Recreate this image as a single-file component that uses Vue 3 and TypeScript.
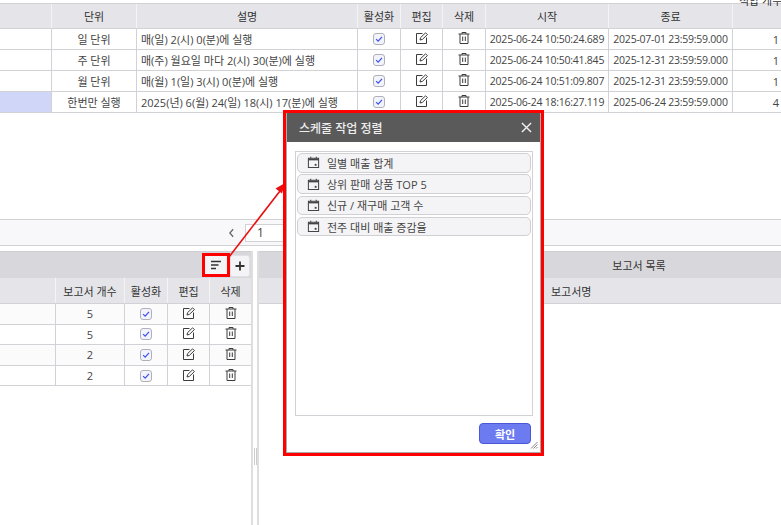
<script setup lang="ts">
interface TopRow { unit: string; desc: string; start: string; end: string; n: string; sel?: boolean }
const topRows: TopRow[] = [
  { unit: '일 단위', desc: '매(일) 2(시) 0(분)에 실행', start: '2025-06-24 10:50:24.689', end: '2025-07-01 23:59:59.000', n: '1' },
  { unit: '주 단위', desc: '매(주) 월요일 마다 2(시) 30(분)에 실행', start: '2025-06-24 10:50:41.845', end: '2025-12-31 23:59:59.000', n: '1' },
  { unit: '월 단위', desc: '매(월) 1(일) 3(시) 0(분)에 실행', start: '2025-06-24 10:51:09.807', end: '2025-12-31 23:59:59.000', n: '1' },
  { unit: '한번만 실행', desc: '2025(년) 6(월) 24(일) 18(시) 17(분)에 실행', start: '2025-06-24 18:16:27.119', end: '2025-06-24 23:59:59.000', n: '4', sel: true },
]
const reportCounts = ['5', '5', '2', '2']
const jobs = ['일별 매출 합계', '상위 판매 상품 TOP 5', '신규 / 재구매 고객 수', '전주 대비 매출 증감율']
</script>

<template>
  <div class="page">
    <section class="top-grid">
      <div class="row head">
        <div class="c c0"></div>
        <div class="c c1">단위</div>
        <div class="c c2">설명</div>
        <div class="c c3">활성화</div>
        <div class="c c4">편집</div>
        <div class="c c5">삭제</div>
        <div class="c c6">시작</div>
        <div class="c c7">종료</div>
        <div class="c c8 clipped"><span>적합 개수</span></div>
      </div>
      <div v-for="r in topRows" :key="r.start" class="row body">
        <div class="c c0" :class="{ sel: r.sel }"></div>
        <div class="c c1">{{ r.unit }}</div>
        <div class="c c2 left">{{ r.desc }}</div>
        <div class="c c3"><span class="chk"><svg viewBox="0 0 12 12" width="10" height="10"><path d="M2.500 6.200 5 8.600 9.600 3.400" fill="none" stroke="#3f52f0" stroke-width="1.500"/></svg></span></div>
        <div class="c c4"><svg class="ic" viewBox="0 0 14 14" width="14" height="14"><path d="M7.500 2.500H1.500v10h10V6.500" fill="none" stroke="#3c3c3c" stroke-width="1"/><path d="M5 9l.6-2.400 5-4.800 1.800 1.800-5 4.800z" fill="none" stroke="#3c3c3c" stroke-width="1"/></svg></div>
        <div class="c c5"><svg class="ic" viewBox="0 0 14 14" width="14" height="14"><path d="M1.500 3h11M5 3V1.500h4V3M3 3v9.500h8V3M5.700 5.500v4.500M8.300 5.500v4.500" fill="none" stroke="#3c3c3c" stroke-width="1"/></svg></div>
        <div class="c c6 date">{{ r.start }}</div>
        <div class="c c7 date">{{ r.end }}</div>
        <div class="c c8 right">{{ r.n }}</div>
      </div>
    </section>

    <div class="pager">
      <span class="prev"><svg viewBox="0 0 8 12" width="7" height="10"><path d="M6 1.500 2 6l4 4.500" fill="none" stroke="#666" stroke-width="1.500"/></svg></span>
      <span class="page-input">1</span>
    </div>

    <section class="lower">
      <div class="panel left-panel">
        <div class="bar">
          <span class="mark"><button class="tool sort"><svg viewBox="0 0 12 10" width="12" height="10"><path d="M1 1.500h10M1 5h7.500M1 8.500h5" stroke="#333" stroke-width="1.400" fill="none"/></svg></button></span>
          <button class="tool plus"><svg viewBox="0 0 10 10" width="10" height="10"><path d="M5 .5v9M.5 5h9" stroke="#333" stroke-width="1.800" fill="none"/></svg></button>
        </div>
        <div class="lrow lhead">
          <div class="l l0"></div>
          <div class="l l1">보고서 개수</div>
          <div class="l l2">활성화</div>
          <div class="l l3">편집</div>
          <div class="l l4">삭제</div>
        </div>
        <div v-for="(n, i) in reportCounts" :key="i" class="lrow lbody">
          <div class="l l0"></div>
          <div class="l l1">{{ n }}</div>
          <div class="l l2"><span class="chk"><svg viewBox="0 0 12 12" width="10" height="10"><path d="M2.500 6.200 5 8.600 9.600 3.400" fill="none" stroke="#3f52f0" stroke-width="1.500"/></svg></span></div>
          <div class="l l3"><svg class="ic" viewBox="0 0 14 14" width="14" height="14"><path d="M7.500 2.500H1.500v10h10V6.500" fill="none" stroke="#3c3c3c" stroke-width="1"/><path d="M5 9l.6-2.400 5-4.800 1.800 1.800-5 4.800z" fill="none" stroke="#3c3c3c" stroke-width="1"/></svg></div>
          <div class="l l4"><svg class="ic" viewBox="0 0 14 14" width="14" height="14"><path d="M1.500 3h11M5 3V1.500h4V3M3 3v9.500h8V3M5.700 5.500v4.500M8.300 5.500v4.500" fill="none" stroke="#3c3c3c" stroke-width="1"/></svg></div>
        </div>
      </div>
      <div class="splitter"><span class="grip"></span></div>
      <div class="panel right-panel">
        <div class="bar title">보고서 목록</div>
        <div class="rhead">보고서명</div>
      </div>
    </section>

    <svg class="arrow" viewBox="0 0 781 525" width="781" height="525">
      <path d="M229 257 280 191" stroke="#e81010" stroke-width="1.600" fill="none"/>
      <path d="M285 183 275.500 188.500 282 193.500z" fill="#e81010"/>
    </svg>

    <div class="modal">
      <div class="m-title">
        <span>스케줄 작업 정렬</span>
        <svg viewBox="0 0 12 12" width="11" height="11"><path d="M1 1l10 10M11 1 1 11" stroke="#f2f2f2" stroke-width="1.500" fill="none"/></svg>
      </div>
      <div class="m-body">
        <div class="m-list">
          <div v-for="j in jobs" :key="j" class="job">
            <svg viewBox="0 0 14 14" width="13" height="13"><path d="M1.500 2.500h11v10h-11z" fill="none" stroke="#444" stroke-width="1.100"/><path d="M1.500 3.800h11" fill="none" stroke="#444" stroke-width="1.800"/><path d="M4 .8v2M10 .8v2" fill="none" stroke="#444" stroke-width="1.100"/><rect x="8.300" y="8.500" width="2" height="2" fill="#444"/></svg>
            <span>{{ j }}</span>
          </div>
        </div>
        <div class="m-foot"><button class="ok">확인</button></div>
      </div>
      <svg class="resize" viewBox="0 0 8 8" width="8" height="8"><path d="M7.500 1 1 7.500M7.500 3.500 3.500 7.500M7.500 6 6 7.500" stroke="#888" stroke-width="1" fill="none"/></svg>
    </div>
  </div>
</template>

<style>
html, body { margin: 0; background: #fff; }
</style>

<style scoped>
.page {
  position: relative;
  width: 781px;
  height: 525px;
  overflow: hidden;
  background: #fff;
  font-family: "Open Sans", "Noto Sans CJK KR", sans-serif;
  font-size: 11px;
  color: #444;
}
.top-grid { padding-top: 3px; }
.row {
  display: grid;
  grid-template-columns: 52px 85px 221px 43px 42px 43px 123px 124px 48px;
  border-bottom: 1px solid #d2d2d6;
}
.row.head { height: 24px; background: #e5e5e9; border-top: 1px solid #d2d2d6; color: #333; }
.row.body { height: 20px; }
.c {
  display: flex;
  align-items: center;
  justify-content: center;
  border-right: 1px solid #d2d2d6;
  white-space: nowrap;
  overflow: hidden;
  min-width: 0;
}
.head .c { border-right-color: #f4f4f6; }
.c.left { justify-content: flex-start; padding-left: 4px; }
.c.right { justify-content: flex-end; border-right: 0; padding-right: 2px; }
.c.date { font-size: 10.500px; letter-spacing: -0.240px; }
.c8 { border-right: 0; }
.c.sel { background: #d0d6f7; }
.clipped { position: relative; overflow: visible; }
.clipped span { position: absolute; top: -12px; left: 6px; }
.chk {
  display: inline-flex;
  align-items: center;
  justify-content: center;
  width: 10px;
  height: 10px;
  border: 1.500px solid #b0b0ba;
  border-radius: 3px;
  background: #f3f4fb;
}
.ic { position: relative; top: -1px; }
.pager {
  display: flex;
  align-items: center;
  height: 25px;
  margin-top: 106px;
  padding-left: 228px;
  background: #f8f8fa;
  border-top: 1px solid #d2d2d6;
  border-bottom: 1px solid #d2d2d6;
  gap: 10px;
}
.prev { display: inline-flex; }
.page-input {
  display: inline-block;
  width: 50px;
  height: 16px;
  line-height: 16px;
  padding-left: 11px;
  background: #fff;
  border: 1px solid #d2d2d6;
  font-size: 12px;
}
.lower { display: flex; height: 274px; margin-top: 5px; }
.panel { min-width: 0; }
.left-panel { width: 253px; flex: none; border-right: 2px solid #dedee0; box-sizing: border-box; }
.splitter {
  width: 4px;
  flex: none;
  display: flex;
  align-items: center;
  justify-content: center;
}
.grip {
  width: 3px;
  height: 17px;
  margin-top: 137px;
  border-left: 1px solid #ccc;
  border-right: 1px solid #ccc;
  box-sizing: border-box;
}
.right-panel { flex: 1; border-left: 2px solid #dedee0; }
.bar {
  height: 27px;
  background: #d8d8dc;
  border-top: 1px solid #cfcfd3;
  box-sizing: border-box;
  display: flex;
  align-items: center;
  justify-content: flex-end;
  padding-right: 1px;
}
.bar.title { justify-content: center; color: #333; padding-right: 0; padding-left: 238px; }
.mark {
  display: inline-flex;
  box-sizing: border-box;
  width: 28px;
  height: 24px;
  border: 3px solid #f00;
}
.tool {
  padding: 0;
  border: 1px solid #e2e2e6;
  border-radius: 3px;
  background: #f4f4f6;
  display: inline-flex;
  align-items: center;
  justify-content: center;
}
.tool.sort { width: 22px; height: 18px; border: 0; border-radius: 0; }
.tool.plus { width: 20px; height: 22px; margin-top: 1px; }
.lrow { display: grid; grid-template-columns: 56px 69px 43px 42px 41px; }
.lhead { height: 25px; background: #e5e5e9; border-bottom: 1px solid #d2d2d6; color: #333; }
.lbody { height: 19.600px; border-bottom: 1px solid #d2d2d6; }
.lbody:nth-child(odd) { background: #fbfbfc; }
.l {
  display: flex;
  align-items: center;
  justify-content: center;
  border-right: 1px solid #d2d2d6;
  white-space: nowrap;
}
.lhead .l { border-right-color: #f4f4f6; }
.l4 { border-right: 0; }
.rhead {
  height: 25px;
  background: #e5e5e9;
  border-bottom: 1px solid #d2d2d6;
  display: flex;
  align-items: center;
  padding-left: 292px;
  color: #333;
}
.arrow { position: absolute; left: 0; top: 0; pointer-events: none; }
.modal {
  position: absolute;
  left: 283px;
  top: 110px;
  width: 261px;
  height: 346px;
  box-sizing: border-box;
  border: 3px solid #f00;
  background: #fff;
  box-shadow: inset 0 0 0 1px #aaa;
  display: flex;
  flex-direction: column;
  padding: 0 1px 1px;
}
.m-title {
  height: 29px;
  flex: none;
  background: #5a5a5a;
  color: #eee;
  font-size: 12px;
  font-weight: 500;
  display: flex;
  align-items: center;
  justify-content: space-between;
  padding: 0 8px 0 12px;
}
.m-body {
  flex: 1;
  display: flex;
  flex-direction: column;
  padding: 9px 7px 7px 8px;
  min-height: 0;
}
.m-list {
  height: 265px;
  flex: none;
  box-sizing: border-box;
  border: 1px solid #d2d2d6;
  padding: 1px;
  display: flex;
  flex-direction: column;
  gap: 1.800px;
}
.job {
  height: 19.500px;
  flex: none;
  box-sizing: border-box;
  border: 1px solid #d0d0d4;
  border-radius: 5px;
  background: #f4f4f6;
  display: flex;
  align-items: center;
  gap: 7px;
  padding-left: 9px;
  color: #444;
}
.m-foot { display: flex; justify-content: flex-end; padding: 7px 2px 0 0; }
.ok {
  width: 52px;
  height: 21px;
  padding: 0;
  border: 1px solid #4a58d8;
  border-radius: 4px;
  background: #6c7cf0;
  color: #fff;
  font-family: inherit;
  font-size: 11px;
  font-weight: 700;
}
.resize { position: absolute; right: 3px; bottom: 4px; }
</style>
